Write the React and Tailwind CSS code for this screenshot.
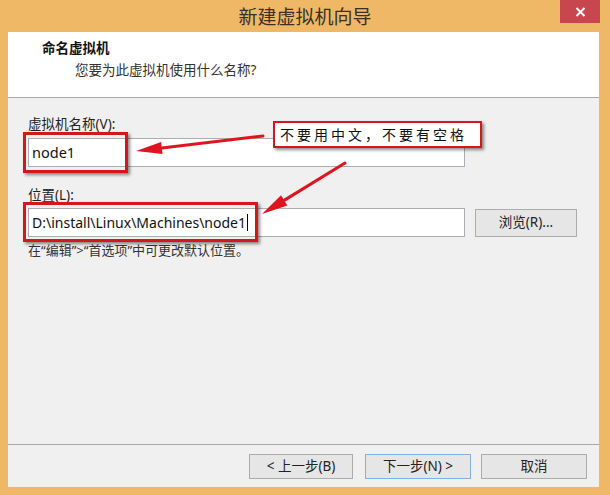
import React from "react";

const font = { fontFamily: '"Noto Sans", "Noto Sans CJK SC", sans-serif' };

function Arrow({ x1, y1, x2, y2 }) {
  // head pointing at (x2, y2)
  const dx = x2 - x1;
  const dy = y2 - y1;
  const len = Math.hypot(dx, dy);
  const ux = dx / len;
  const uy = dy / len;
  const hl = 26;
  const hw = 6;
  const bx = x2 - ux * hl;
  const by = y2 - uy * hl;
  const pts = `${x2},${y2} ${bx - uy * hw},${by + ux * hw} ${bx + uy * hw},${by - ux * hw}`;
  return (
    <g>
      <line x1={x1} y1={y1} x2={bx} y2={by} stroke="#e0141e" strokeWidth="3" strokeLinecap="round" />
      <polygon points={pts} fill="#e0141e" />
    </g>
  );
}

function Btn({ children, w, active }) {
  return (
    <div
      className={`h-[25px] flex items-center justify-center text-[13.5px] text-[#222] bg-[#e6e6e6] border ${
        active ? "border-[#7fb2e4]" : "border-[#acacac]"
      }`}
      style={{ width: w }}
    >
      {children}
    </div>
  );
}

export default function App() {
  return (
    <div className="relative w-[610px] h-[495px] bg-[#efb866] flex flex-col overflow-hidden" style={font}>
      {/* title bar */}
      <div className="relative h-[32px] flex items-center justify-center shrink-0">
        <span className="text-[19px] text-[#3a3024] pt-[2px]">新建虚拟机向导</span>
        <div className="absolute right-[10px] top-0 w-[40px] h-[23px] bg-[#c8464e] flex items-center justify-center">
          <svg width="11" height="10" viewBox="0 0 11 10">
            <path d="M1.5 1 L9.5 9 M9.5 1 L1.5 9" stroke="#fff" strokeWidth="2" />
          </svg>
        </div>
      </div>

      {/* client */}
      <div className="ml-[8px] mr-[11px] mb-[8px] flex-1 flex flex-col bg-[#f0f0f0]">
        <div className="h-[66px] bg-white border-b border-[#a8a8a8] pl-[34px] pt-[7px] shrink-0">
          <div className="text-[13.5px] font-bold text-[#111] leading-[18px]">命名虚拟机</div>
          <div className="text-[13.5px] text-[#333] leading-[18px] pl-[33px] mt-[4px]">您要为此虚拟机使用什么名称?</div>
        </div>

        <div className="flex-1 pl-[20px] pt-[17px]">
          <div className="text-[13.5px] text-[#222] leading-[18px]">虚拟机名称(V):</div>
          <div className="mt-[5px] w-[437px] h-[29px] bg-white border border-[#abadb3] flex items-center pl-[3px] text-[14.5px] text-[#111]">
            node1
          </div>
          <div className="mt-[19px] text-[13.5px] text-[#222] leading-[18px]">位置(L):</div>
          <div className="mt-[4px] flex items-center">
            <div className="w-[437px] h-[29px] bg-white border border-[#abadb3] flex items-center pl-[3px] text-[14px] text-[#111]">
              D:\install\Linux\Machines\node1
              <span className="inline-block w-[1px] h-[17px] bg-black ml-[1px]" />
            </div>
            <div className="ml-[10px] w-[102px] h-[28px] bg-[#e6e6e6] border border-[#acacac] flex items-center justify-center text-[13.5px] text-[#222]">
              浏览(R)...
            </div>
          </div>
          <div className="mt-[4px] text-[13px] text-[#333] leading-[18px]">在“编辑”&gt;“首选项”中可更改默认位置。</div>
        </div>

        <div className="h-[43px] border-t border-[#a8a8a8] flex items-center pl-[241px] gap-[13px] shrink-0">
          <Btn w={104}>&lt; 上一步(B)</Btn>
          <div className="-ml-[1px]">
            <Btn w={106} active>下一步(N) &gt;</Btn>
          </div>
          <div className="-ml-[3px]">
            <Btn w={106}>取消</Btn>
          </div>
        </div>
      </div>

      {/* annotations */}
      <div className="absolute left-[23px] top-[132px] w-[105px] h-[41px] border-[3px] border-[#d4161f] shadow-[2px_2px_3px_rgba(0,0,0,0.45)]" />
      <div className="absolute left-[23px] top-[202px] w-[235px] h-[40px] border-[3px] border-[#d4161f] shadow-[2px_2px_3px_rgba(0,0,0,0.45)]" />
      <div className="absolute left-[273px] top-[121px] w-[209px] h-[27px] bg-white border-[2px] border-[#d4161f] shadow-[2px_2px_3px_rgba(0,0,0,0.45)] flex items-center pl-[5px] text-[14px] tracking-[3px] text-[#111]">
        不要用中文，不要有空格
      </div>
      <svg className="absolute inset-0 pointer-events-none" width="610" height="495">
        <Arrow x1={263} y1={136} x2={136} y2={151} />
        <Arrow x1={345} y1={163} x2={262} y2={214} />
      </svg>
    </div>
  );
}
